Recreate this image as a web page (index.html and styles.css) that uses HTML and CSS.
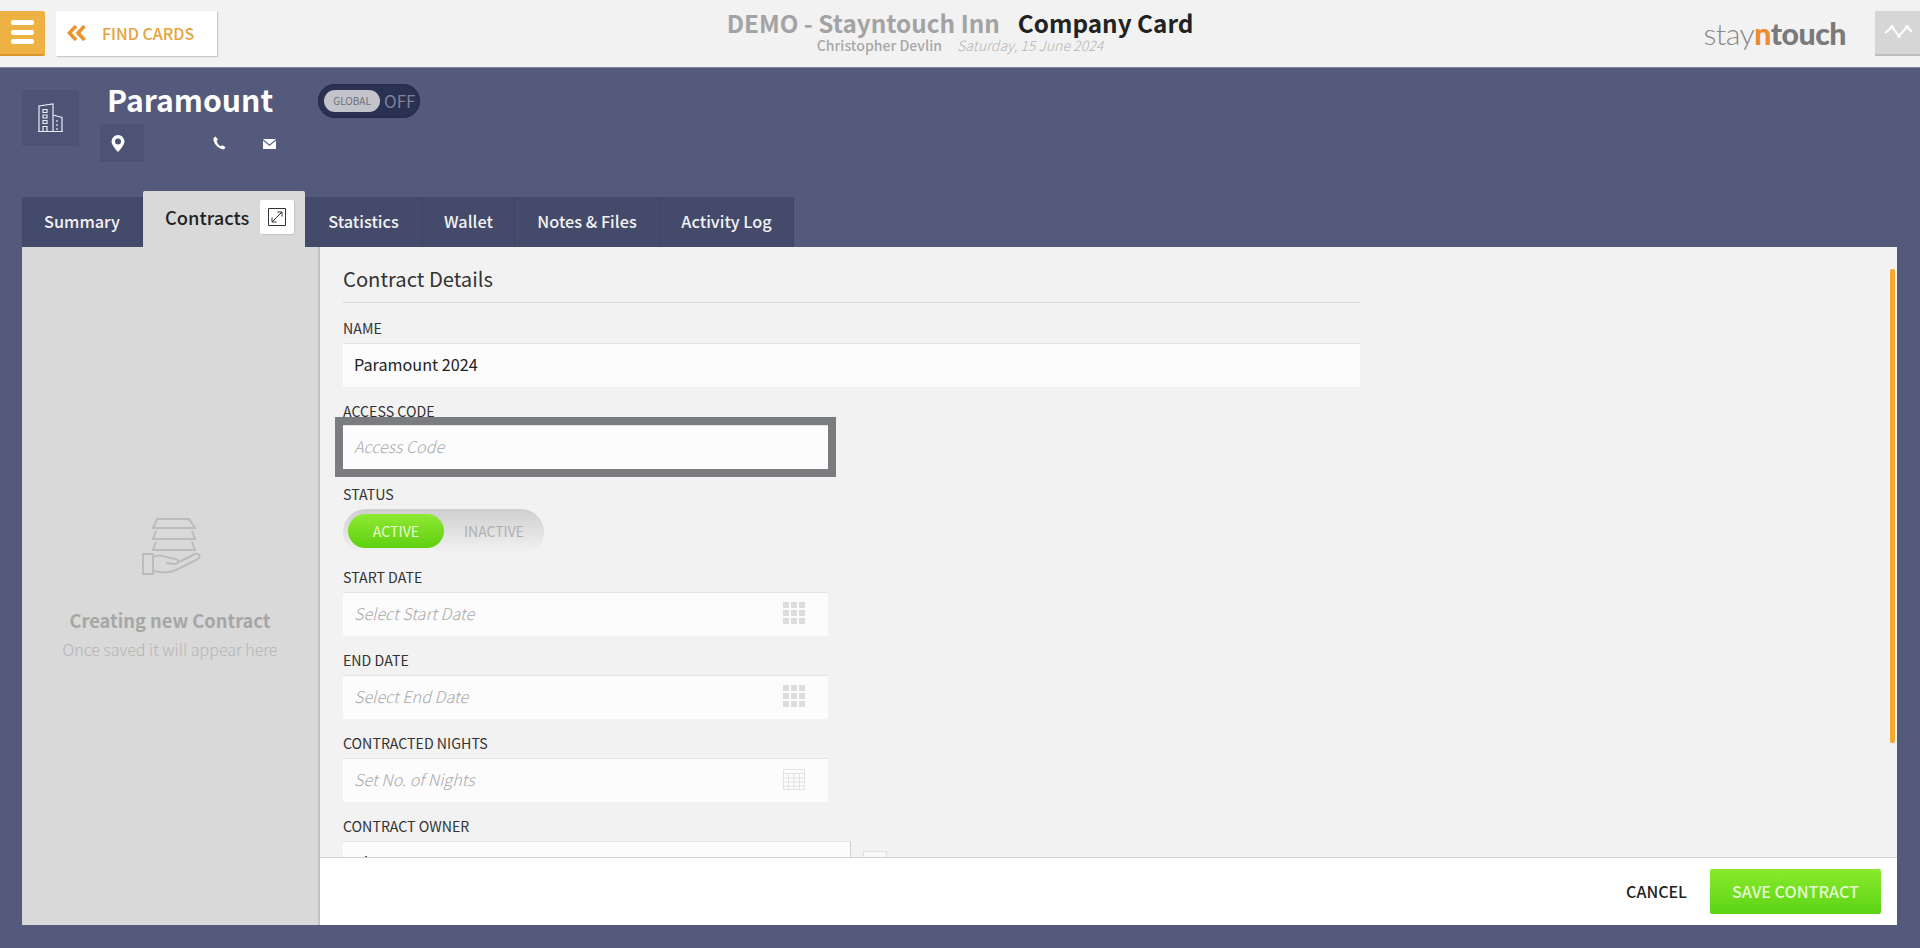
FILE: index.html
```html
<!doctype html>
<html>
<head>
<meta charset="utf-8">
<title>Company Card</title>
<link rel="stylesheet" href="styles.css">
</head>
<body>

<header class="topbar">
  <div class="topbar-left">
    <button class="menu-btn"><span></span><span></span><span></span></button>
    <button class="find-btn">
      <svg width="20" height="16" viewBox="0 0 20 16"><path d="M9 1 2.500 8 9 15M17.500 1 11 8l6.500 7" fill="none" stroke="#e8952b" stroke-width="3.600"/></svg>
      FIND CARDS
    </button>
  </div>
  <div class="topbar-title">
    <div class="title-line"><span class="hotel">DEMO - Stayntouch Inn</span><span class="page-name">Company Card</span></div>
    <div class="sub-line"><span class="user">Christopher Devlin</span><span class="date">Saturday, 15 June 2024</span></div>
  </div>
  <div class="topbar-right">
    <div class="logo">stay<b class="logo-n">n</b><b>touch</b></div>
    <button class="graph-btn">
      <svg width="32" height="20" viewBox="0 0 32 20"><path d="M3 11 10 5l7 9 8-9 5 5" fill="none" stroke="#fff" stroke-width="2"/><circle cx="10" cy="5" r="2" fill="#fff"/><circle cx="17" cy="14" r="2" fill="#fff"/><circle cx="25" cy="5" r="2" fill="#fff"/></svg>
    </button>
  </div>
</header>

<section class="card-head">
  <div class="company-icon">
    <svg width="26" height="30" viewBox="0 0 26 30" fill="none" stroke="#e9ebf3" stroke-width="1.200"><path d="M1 28.500V3l14-2v27.500M15 12l9 2.500v14M0 28.500h25"/><path d="M5 6.500h4v3H5zM5 12h4v3H5zM5 17.500h4v3H5zM5 23.500h4v5H5zM19 17v2M19 21v2M19 25v2"/></svg>
  </div>
  <div class="company-info">
    <div class="company-top">
      <h1 class="company-name">Paramount</h1>
      <div class="global-switch"><span class="global-knob">GLOBAL</span><span class="global-off">OFF</span></div>
    </div>
    <div class="contact-row">
      <div class="contact-pin">
        <svg width="14" height="17" viewBox="0 0 14 17"><path fill-rule="evenodd" d="M7 0a6.500 6.500 0 0 1 6.500 6.500C13.500 10.500 7 17 7 17S.5 10.500.5 6.500A6.500 6.500 0 0 1 7 0Zm0 3.500a3 3 0 1 0 0 6 3 3 0 0 0 0-6Z" fill="#fff"/></svg>
      </div>
      <svg class="contact-phone" width="14" height="14" viewBox="0 0 14 14"><path d="M3.500.5 1.500 2c-.6 5 4 10.500 10.500 11.500l1.500-2.200-3-2-1.500 1C6.500 9.500 5 7 4.700 4.700L6 3.500Z" fill="#fff"/></svg>
      <svg class="contact-mail" width="13" height="10" viewBox="0 0 13 10"><path d="M0 0h13L6.500 5.500ZM0 1.500V10h13V1.500L6.500 7Z" fill="#fff"/></svg>
    </div>
  </div>
</section>

<nav class="tabs">
  <div class="tab">Summary</div>
  <div class="tab tab-active">Contracts
    <span class="expand-btn">
      <svg width="18" height="18" viewBox="0 0 18 18" fill="none" stroke="#333" stroke-width="1"><path d="M.5.5h17v17H.5zM4 14 14 4M9.500 4H14v4.500M4 9.500V14h4.500"/></svg>
    </span>
  </div>
  <div class="tab">Statistics</div>
  <div class="tab">Wallet</div>
  <div class="tab">Notes &amp; Files</div>
  <div class="tab">Activity Log</div>
</nav>

<main class="panel">
  <aside class="side">
    <svg class="side-icon" width="62" height="60" viewBox="0 0 62 60" fill="none" stroke="#bcbcbc" stroke-width="2"><path d="M15 1h32l6 9H11ZM14 13l-3 8h42l-3-8M14 24l-3 8h42l-3-8"/><path d="M1 36h10v20H1zM11 39c6-3 9-1 13 0l10 2c3 1 3 5-1 5l-9-1M11 53c9 1 14 3 23-1l22-11c3-3 1-6-3-5l-16 8"/></svg>
    <div class="side-title">Creating new Contract</div>
    <div class="side-note">Once saved it will appear here</div>
  </aside>

  <div class="content">
    <form class="form">
      <h2 class="form-title">Contract Details</h2>
      <div class="field">
        <label>NAME</label>
        <div class="input input-wide input-value">Paramount 2024</div>
      </div>
      <div class="field">
        <label>ACCESS CODE</label>
        <div class="input input-focus">Access Code</div>
      </div>
      <div class="field">
        <label>STATUS</label>
        <div class="status-switch"><span class="status-on">ACTIVE</span><span class="status-off">INACTIVE</span></div>
      </div>
      <div class="field">
        <label>START DATE</label>
        <div class="input">Select Start Date
          <svg width="22" height="22" viewBox="0 0 22 22" fill="#dcdcdc"><path d="M0 0h6v6H0zM8 0h6v6H8zM16 0h6v6h-6zM0 8h6v6H0zM8 8h6v6H8zM16 8h6v6h-6zM0 16h6v6H0zM8 16h6v6H8zM16 16h6v6h-6z"/></svg>
        </div>
      </div>
      <div class="field">
        <label>END DATE</label>
        <div class="input">Select End Date
          <svg width="22" height="22" viewBox="0 0 22 22" fill="#dcdcdc"><path d="M0 0h6v6H0zM8 0h6v6H8zM16 0h6v6h-6zM0 8h6v6H0zM8 8h6v6H8zM16 8h6v6h-6zM0 16h6v6H0zM8 16h6v6H8zM16 16h6v6h-6z"/></svg>
        </div>
      </div>
      <div class="field">
        <label>CONTRACTED NIGHTS</label>
        <div class="input">Set No. of Nights
          <svg width="22" height="23" viewBox="0 0 22 23" fill="none" stroke="#e2e2e2" stroke-width="1"><path d="M.5 2.500h21v20H.5zM.5 6.500h21M.5 11h21M.5 15h21M.5 19h21M5.500 6.500v16M11 6.500v16M16.500 6.500v16"/></svg>
        </div>
      </div>
      <div class="field">
        <label>CONTRACT OWNER</label>
        <div class="owner-row">
          <div class="input input-owner input-value">Alexa Grant</div>
          <span class="owner-check"></span>
        </div>
      </div>
    </form>
    <div class="scrollbar"></div>
    <footer class="actions">
      <button class="cancel-btn">CANCEL</button>
      <button class="save-btn">SAVE CONTRACT</button>
    </footer>
  </div>
</main>

</body>
</html>
```

FILE: styles.css
```css
* {
  box-sizing: border-box;
}
html, body {
  height: 100%;
}
body {
  background: #535a7c;
  color: #222;
  display: flex;
  flex-direction: column;
  font-family: "Noto Sans CJK JP", "Liberation Sans", sans-serif;
  height: 948px;
  margin: 0;
  overflow: hidden;
}
button {
  border: none;
  font-family: inherit;
  padding: 0;
}

/* top bar */
.topbar {
  align-items: center;
  background: #f2f2f2;
  border-bottom: 1px solid #7d83a0;
  display: flex;
  flex: none;
  height: 68px;
  justify-content: space-between;
  padding-bottom: 1px;
  position: relative;
}
.topbar-left {
  display: flex;
  gap: 11px;
}
.menu-btn {
  align-items: center;
  background: #eeb143;
  border-bottom: 2px solid #d9962c;
  border-radius: 0 2px 2px 0;
  display: flex;
  flex-direction: column;
  gap: 4.500px;
  height: 45px;
  justify-content: center;
  width: 45px;
}
.menu-btn span {
  background: #fff;
  border-radius: 2px;
  display: block;
  height: 5px;
  width: 23px;
}
.find-btn {
  align-items: center;
  background: #fff;
  box-shadow: 1px 1px 1px #c9c9c9;
  color: #e8a23c;
  display: flex;
  font-size: 16px;
  font-weight: 500;
  gap: 15px;
  height: 45px;
  line-height: 20px;
  padding-left: 11px;
  width: 161px;
}
.topbar-title {
  left: 0;
  pointer-events: none;
  position: absolute;
  right: 0;
  text-align: center;
  top: 9px;
}
.title-line {
  font-size: 24.300px;
  font-weight: 700;
  height: 28px;
  line-height: 28px;
}
.hotel {
  color: #a3a3a3;
  display: inline-block;
  margin-right: 18px;
}
.page-name {
  color: #222;
  display: inline-block;
}
.sub-line {
  font-size: 14.100px;
  line-height: 16px;
}
.user {
  color: #a8a8a8;
  display: inline-block;
  font-weight: 500;
  margin-right: 15px;
}
.date {
  color: #b5b5b5;
  display: inline-block;
  font-style: italic;
  font-weight: 300;
}
.topbar-right {
  align-items: center;
  display: flex;
  gap: 29px;
}
.logo {
  color: #8a8a8a;
  font-family: Lato, sans-serif;
  font-size: 30.300px;
  font-weight: 300;
  letter-spacing: -.5px;
  line-height: 34px;
}
.logo b {
  color: #7a7a7a;
  font-weight: 900;
}
.logo .logo-n {
  color: #ee8a32;
}
.graph-btn {
  align-items: center;
  background: #d6d6d6;
  border-bottom: 2px solid #bdbdbd;
  display: flex;
  height: 45px;
  justify-content: center;
  width: 45px;
}

/* company head */
.card-head {
  display: flex;
  flex: none;
  height: 123px;
  padding: 22px 0 0 22px;
}
.company-icon {
  align-items: center;
  background: #4c5374;
  border-radius: 2px;
  display: flex;
  height: 56px;
  justify-content: center;
  width: 57px;
}
.company-info {
  margin-left: 22px;
}
.company-top {
  align-items: flex-start;
  display: flex;
  height: 34px;
}
.company-name {
  color: #fff;
  font-size: 30.200px;
  font-weight: 700;
  line-height: 34px;
  margin: -8px 0 0 6px;
}
.global-switch {
  align-items: center;
  background: #2b3150;
  border-radius: 17px;
  box-shadow: inset 0 0 2px #1d2238;
  color: #7d8299;
  display: flex;
  font-size: 17px;
  height: 34px;
  line-height: 20px;
  margin: -6px 0 0 45px;
  padding-left: 6px;
  width: 102px;
}
.global-knob {
  background: #c3c4cb;
  border-radius: 11px;
  color: #6d6e75;
  font-size: 10px;
  height: 22px;
  line-height: 22px;
  margin-right: 4px;
  text-align: center;
  width: 56px;
}
.contact-row {
  align-items: center;
  display: flex;
  margin-left: -1px;
}
.contact-pin {
  align-items: center;
  background: #4c5374;
  border-radius: 2px;
  display: flex;
  height: 38px;
  padding-left: 11px;
  width: 44px;
}
.contact-phone {
  margin-left: 68px;
}
.contact-mail {
  margin: 2px 0 0 37px;
}

/* tabs */
.tabs {
  align-items: flex-end;
  display: flex;
  flex: none;
  height: 56px;
  padding-left: 22px;
}
.tab {
  align-items: center;
  background: #444a69;
  border-right: 1px solid #3e4462;
  color: #f2f2f4;
  display: flex;
  font-size: 16.300px;
  font-weight: 500;
  height: 50px;
  justify-content: center;
  line-height: 24px;
  padding-bottom: 3px;
  white-space: nowrap;
}
.tab:first-child {
  border-radius: 2px 0 0 0;
  width: 121px;
}
.tab:last-child {
  border-radius: 0 2px 0 0;
}
.tab-active {
  background: #d9d9d9;
  border: none;
  border-radius: 2px 2px 0 0;
  color: #222;
  font-size: 18.300px;
  gap: 11px;
  height: 56px;
  padding: 0 11px 4px 22px;
  width: 162px;
}
.tab:nth-child(3) {
  width: 118px;
}
.tab:nth-child(4) {
  width: 92px;
}
.tab:nth-child(5) {
  width: 145px;
}
.tab:nth-child(6) {
  width: 134px;
}
.expand-btn {
  align-items: center;
  background: #fff;
  border-radius: 2px;
  box-shadow: 1px 1px 1px #c4c4c4;
  display: flex;
  height: 34px;
  justify-content: center;
  width: 34px;
}

/* main panel */
.panel {
  display: flex;
  flex: none;
  height: 678px;
  margin: 0 23px 0 22px;
}
.side {
  align-items: center;
  background: #d9d9d9;
  border-right: 2px solid #c2c2c2;
  display: flex;
  flex: none;
  flex-direction: column;
  padding-top: 271px;
  width: 298px;
}
.side-icon {
  margin-left: 6px;
}
.side-title {
  color: #a6a6a6;
  font-size: 18.300px;
  font-weight: 700;
  line-height: 26px;
  margin-top: 29px;
}
.side-note {
  color: #b4b4b4;
  font-size: 16px;
  font-weight: 300;
  line-height: 24px;
  margin-top: 4px;
}
.content {
  background: #f2f2f2;
  display: flex;
  flex: 1;
  flex-direction: column;
  position: relative;
}
.form {
  flex: 1;
  overflow: hidden;
  padding: 16px 0 0 23px;
}
.form-title {
  border-bottom: 1px solid #d8d8d8;
  color: #333;
  font-size: 20.200px;
  font-weight: 400;
  height: 40px;
  line-height: 32px;
  margin: 0 0 15px;
  width: 1017px;
}
.field {
  height: 83px;
}
.field label {
  color: #333;
  display: block;
  font-size: 14.200px;
  height: 25px;
  line-height: 20px;
}
.input {
  align-items: center;
  background: #fcfcfc;
  box-shadow: inset 0 1px #e4e4e4;
  color: #a9a9a9;
  display: flex;
  font-size: 16.200px;
  font-style: italic;
  font-weight: 300;
  height: 44px;
  justify-content: space-between;
  line-height: 24px;
  padding: 0 23px 3px 11px;
  width: 485px;
}
.input-value {
  color: #222;
  font-style: normal;
  font-weight: 400;
}
.input-wide {
  width: 1017px;
}
.input-focus {
  margin-top: -1px;
  outline: 8px solid #7b7c80;
}
.owner-row {
  display: flex;
  gap: 12px;
}
.input-owner {
  border-right: 1px solid #cfcfcf;
  width: 508px;
}
.owner-check {
  background: #f8f8f8;
  border: 1px solid #e2e2e2;
  height: 24px;
  margin-top: 10px;
  width: 24px;
}
.status-switch {
  align-items: center;
  background: linear-gradient(#cfcfcf, #f2f2f2 95%);
  border-radius: 23px;
  display: flex;
  height: 46px;
  padding: 0 0 2px 5px;
  width: 201px;
}
.status-on {
  background: linear-gradient(#8fe932, #5fd011);
  border-radius: 17px;
  color: #e8fbd0;
  font-size: 14.200px;
  height: 34px;
  line-height: 34px;
  text-align: center;
  width: 96px;
}
.status-off {
  color: #b0b0b0;
  font-size: 14px;
  margin-left: 20px;
}
.scrollbar {
  background: #f4a82f;
  border-radius: 2px;
  height: 474px;
  position: absolute;
  right: 2px;
  top: 22px;
  width: 5px;
}
.actions {
  align-items: center;
  background: #fff;
  border-top: 1px solid #d2d2d2;
  display: flex;
  flex: none;
  gap: 23px;
  height: 68px;
  justify-content: flex-end;
  padding: 0 16px 0 0;
}
.cancel-btn {
  background: none;
  color: #222;
  font-size: 16px;
  font-weight: 500;
  padding-bottom: 2px;
}
.save-btn {
  background: linear-gradient(#8aea2d, #5bd414);
  border-radius: 2px;
  color: #e6f9cf;
  font-size: 16.200px;
  font-weight: 500;
  height: 45px;
  padding-bottom: 2px;
  width: 171px;
}
```
